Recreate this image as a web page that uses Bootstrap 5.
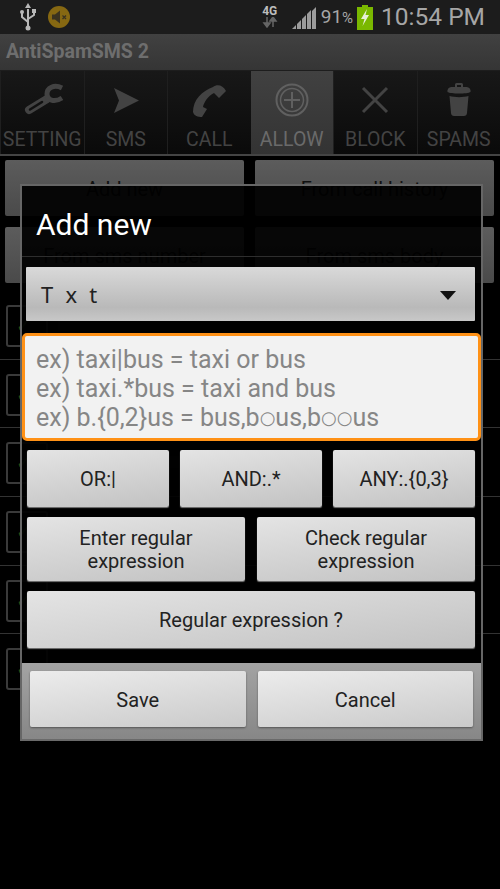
<!DOCTYPE html>
<html lang="en">

<head>
    <meta charset="UTF-8">
    <title>AntiSpamSMS 2</title>
    <link href="https://cdn.jsdelivr.net/npm/bootstrap@5.3.0/dist/css/bootstrap.min.css" rel="stylesheet">
    <style>
        html, body { height: 889px; overflow: hidden; background: #000; }
        body { font-family: Roboto, "Liberation Sans", sans-serif; }

        /* dimmed app behind the dialog */
        .status-strip { height: 34px; background: #1c1c1c; color: #a6a6a6; }
        .status-time { font-size: 24.5px; line-height: 34px; margin-left: 8px; margin-right: 15px; }
        .status-pct { font-size: 19px; margin-left: 5px; margin-right: 4px; line-height: 34px; }
        .status-pct span { font-size: 15px; }
        .net-type { width: 24px; margin-right: 10px; font-size: 12px; font-weight: 700; line-height: 11px; color: #bdbdbd; text-align: center; }
        .app-title { height: 36px; background: linear-gradient(#414141, #353535); color: #6e6e6e; font-size: 19.5px; font-weight: 700; line-height: 35px; padding-left: 6px; }
        .tab-strip { height: 86px; background: #444; padding-bottom: 2px; border-top: 1px solid #1d1d1d; }
        .tab-item { flex: 1 1 0; background: linear-gradient(#181818, #0a0a0a); color: #434343; font-size: 19.5px; line-height: 22px; border-left: 1px solid #1f1f1f; padding-top: 7px; min-width: 0; white-space: nowrap; }
        .tab-item svg { display: block; margin: 0 auto 7px; }
        .tab-item.tab-on { background: linear-gradient(#414141, #333); color: #6a6a6a; border-left: 0; }
        .dim-btn { flex: 1 1 45%; height: 56px; background: linear-gradient(#5c5c5c, #4a4a4a); color: #101010; font-size: 20px; line-height: 58px; text-align: center; border-radius: 2px; }
        .dim-buttons { padding: 4px 6px 0 5px; gap: 11px 11px; }
        .dim-row { height: 68.7px; border-bottom: 1px solid #333; padding: 14px 0 0 6px; }
        .dim-row:last-child { border-bottom: 0; }
        .dim-check { width: 42px; height: 42px; border: 2px solid #3a3a3a; border-radius: 3px; color: #2c4a14; font-size: 18px; line-height: 38px; padding-left: 8px; }
        .dim-bar { width: 142px; height: 12px; background: #161616; margin: 14px 0 0 10px; }

        /* dialog */
        .dlg { top: 184px; left: 20px; width: 463px; height: 557px; background: rgba(0, 0, 0, .92); border: 2px solid #666; border-bottom-color: #6a6a6a; }
        .dlg-title { height: 71px; color: #fff; font-size: 30px; line-height: 78px; padding-left: 14px; border-bottom: 1px solid #2e2e2e; }
        .droid-btn { background: linear-gradient(172deg, #e4e4e4, #c2c2c2); color: #222; font-size: 20px; line-height: 23px; border-radius: 2px; box-shadow: 0 1px 1px #777; padding-top: 2px; }
        .spin-box { height: 54px; margin: 10px 6px 0 4px; background: linear-gradient(#d9d9d9, #b9b9b9 75%, #c8c8c8); color: #222; padding: 0 19px 0 15px; border-radius: 1px; }
        .spin-box b { width: 0; height: 0; border-left: 8px solid transparent; border-right: 8px solid transparent; border-top: 9px solid #111; margin-top: 3px; }
        .spin-label { word-spacing: 6.5px; font-family: "Noto Sans", sans-serif; font-size: 22px; }
        .regex-hint { height: 108px; margin-top: 12px; background: #f2f2f2; border: 3px solid #ff9116; border-radius: 5px; color: #868686; font-size: 25px; line-height: 29px; padding: 9px 11px 0; white-space: nowrap; }
        .regex-hint i { font-family: "DejaVu Sans", sans-serif; font-style: normal; font-size: 18px; vertical-align: 2px; }
        .btn-stack { margin: 9px 6px 0 5px; gap: 10px; }
        .h-57 { height: 57px; }
        .h-64 { height: 64px; }
        .gap-11 { gap: 11px; }
        .gap-12 { gap: 12px; }
        .dlg-foot { height: 76px; margin-top: 15px; background: linear-gradient(#a3a3a3, #878787); padding: 8px 8px 12px; }
        .dlg-foot .droid-btn { background: linear-gradient(172deg, #ececec, #cacaca); box-shadow: 0 1px 2px #555; }
        .flex-even { flex: 1 1 0; }
    </style>
</head>

<body>
    <!-- status bar -->
    <div class="status-strip d-flex align-items-center">
        <svg class="ms-3" width="24" height="30" viewBox="0 0 24 30">
            <g fill="#b8b8b8" stroke="#b8b8b8">
                <path d="M12 7V25" stroke-width="2" fill="none"/>
                <path d="M12 1l-3 5h6z" stroke="none"/>
                <circle cx="12" cy="26" r="2.500" stroke="none"/>
                <path d="M12 20L6 15V11M12 17L18 13V10" fill="none" stroke-width="2"/>
                <circle cx="6" cy="10" r="2" stroke="none"/>
                <rect x="16" y="7" width="4" height="4" stroke="none"/>
            </g>
        </svg>
        <svg width="24" height="24" viewBox="0 0 24 24" class="ms-2">
            <circle cx="11" cy="12" r="11" fill="#866812"/>
            <path d="M4 9.500h3l5-4v13l-5-4H4z" fill="#3b3320"/>
            <path d="M14.500 10.500l3.500 3.500M18 10.500l-3.500 3.500" stroke="#3b3320" stroke-width="1.300"/>
        </svg>
        <div class="net-type ms-auto">4G
            <svg class="d-block mx-auto" width="16" height="11" viewBox="0 0 16 11">
                <path d="M5 0v7M2 6l3 4 3-4z M11 10V3M8 4l3-4 3 4z" fill="#666" stroke="#666" stroke-width="1.500"/>
            </svg>
        </div>
        <svg width="24" height="24" viewBox="0 0 24 24">
            <path d="M0 24l4-4v4zM5 24v-5l4-4v9zM10 24V14l4-4v14zM15 24V9l4-4v19zM20 24V6l4-4v22z" fill="#9c9c9c"/>
        </svg>
        <div class="status-pct">91<span>%</span></div>
        <svg width="16" height="25" viewBox="0 0 16 25">
            <path d="M5 0h6v2h5v23H0V2h5z" fill="#7ab800"/>
            <path d="M10 4L4 14h3.500L5.500 21 12 10H8.500z" fill="#e8f0d8"/>
        </svg>
        <div class="status-time">10:54 PM</div>
    </div>

    <div class="app-title">AntiSpamSMS 2</div>

    <!-- tabs -->
    <div class="tab-strip d-flex text-center">
        <div class="tab-item">
            <svg width="44" height="44" viewBox="0 0 44 44" fill="none" stroke="#434343">
                <path d="M9 32L27 21" stroke-width="8" stroke-linecap="round"/>
                <path d="M10 31.500L22 24" stroke="#111" stroke-width="2.500" stroke-linecap="round"/>
                <path d="M42 10C34 6 27 10 27 16C27 22 34 25 42 20" stroke-width="5"/>
            </svg>SETTING
        </div>
        <div class="tab-item">
            <svg width="44" height="44" viewBox="0 0 44 44" fill="#434343">
                <path d="M10 10L35 22.500 10 35 15 22.500z"/>
            </svg>SMS
        </div>
        <div class="tab-item">
            <svg width="44" height="44" viewBox="0 0 44 44" fill="#434343">
                <path d="M26 9C30 6 36 7 39 13L32 20 27 15C21 18 17 24 16 29L20 31 15 39C11 39 7 38 6 34C6 22 15 13 26 9z"/>
            </svg>CALL
        </div>
        <div class="tab-item tab-on">
            <svg width="44" height="44" viewBox="0 0 44 44" fill="none" stroke="#606060">
                <circle cx="22" cy="22" r="15.500" stroke-width="2"/>
                <circle cx="22" cy="22" r="11.500" stroke-width="1.500"/>
                <path d="M22 14v16M14 22h16" stroke-width="2"/>
            </svg>ALLOW
        </div>
        <div class="tab-item">
            <svg width="44" height="44" viewBox="0 0 44 44" stroke="#434343" stroke-width="3">
                <path d="M10 10l24 24M34 10L10 34"/>
            </svg>BLOCK
        </div>
        <div class="tab-item">
            <svg width="44" height="44" viewBox="0 0 44 44" fill="#434343">
                <path d="M18 9V6.500A1.500 1.500 0 0 1 19.500 5h5A1.500 1.500 0 0 1 26 6.500V9h-2V7h-4v2z"/>
                <path d="M10.500 14a4 4 0 0 1 4-5h15a4 4 0 0 1 4 5c-3 2-20 2-23 0z"/>
                <path d="M12.500 18c5 1.500 14 1.500 19 0l-1.500 17c0 2-1.500 3-3 3h-10c-1.500 0-3-1-3-3z"/>
            </svg>SPAMS
        </div>
    </div>

    <!-- buttons behind the dialog -->
    <div class="dim-buttons d-flex flex-wrap">
        <div class="dim-btn">Add new</div>
        <div class="dim-btn">From call history</div>
        <div class="dim-btn">From sms number</div>
        <div class="dim-btn">From sms body</div>
    </div>

    <!-- list behind the dialog -->
    <div class="mt-2">
        <div class="dim-row d-flex"><div class="dim-check">&#10003;</div><div class="dim-bar"></div></div>
        <div class="dim-row d-flex"><div class="dim-check">&#10003;</div><div class="dim-bar"></div></div>
        <div class="dim-row d-flex"><div class="dim-check">&#10003;</div><div class="dim-bar"></div></div>
        <div class="dim-row d-flex"><div class="dim-check">&#10003;</div><div class="dim-bar"></div></div>
        <div class="dim-row d-flex"><div class="dim-check">&#10003;</div><div class="dim-bar"></div></div>
        <div class="dim-row d-flex"><div class="dim-check">&#10003;</div><div class="dim-bar"></div></div>
    </div>

    <!-- dialog -->
    <div class="dlg position-absolute d-flex flex-column">
        <div class="dlg-title">Add new</div>

        <div class="spin-box d-flex align-items-center justify-content-between">
            <span class="spin-label">T x t</span>
            <b></b>
        </div>

        <div class="regex-hint">
            ex) taxi|bus = taxi or bus<br>
            ex) taxi.*bus = taxi and bus<br>
            ex) b.{0,2}us = bus,b<i>○</i>us,b<i>○○</i>us
        </div>

        <div class="btn-stack d-flex flex-column">
            <div class="d-flex gap-11 h-57">
                <div class="droid-btn flex-even d-flex align-items-center justify-content-center">OR:|</div>
                <div class="droid-btn flex-even d-flex align-items-center justify-content-center">AND:.*</div>
                <div class="droid-btn flex-even d-flex align-items-center justify-content-center">ANY:.{0,3}</div>
            </div>
            <div class="d-flex gap-12 h-64">
                <div class="droid-btn flex-even d-flex align-items-center justify-content-center text-center">Enter regular<br>expression</div>
                <div class="droid-btn flex-even d-flex align-items-center justify-content-center text-center">Check regular<br>expression</div>
            </div>
            <div class="d-flex h-57">
                <div class="droid-btn flex-even d-flex align-items-center justify-content-center">Regular expression ?</div>
            </div>
        </div>

        <div class="dlg-foot d-flex gap-12">
            <div class="droid-btn flex-even d-flex align-items-center justify-content-center">Save</div>
            <div class="droid-btn flex-even d-flex align-items-center justify-content-center">Cancel</div>
        </div>
    </div>

    <script src="https://cdn.jsdelivr.net/npm/bootstrap@5.3.0/dist/js/bootstrap.bundle.min.js"></script>
</body>

</html>
